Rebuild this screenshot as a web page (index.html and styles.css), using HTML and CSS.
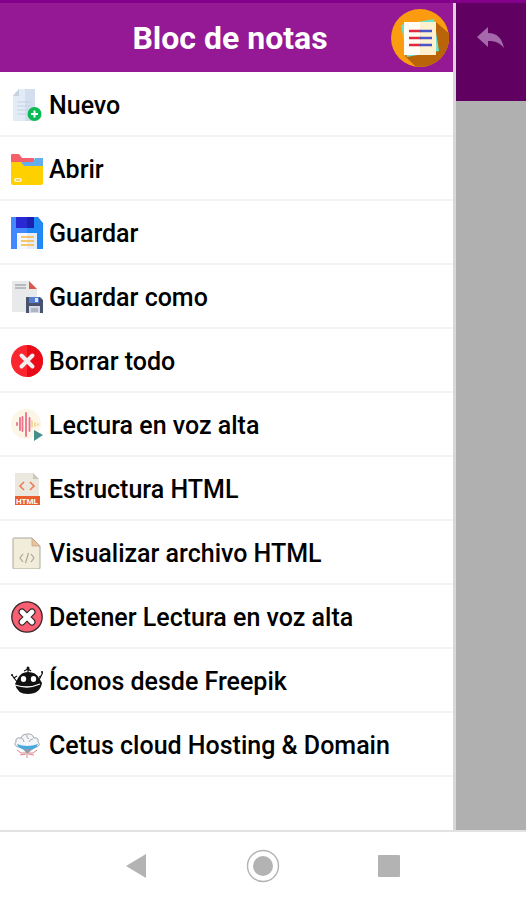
FILE: index.html
```html
<!DOCTYPE html>
<html lang="es">
<head>
  <meta charset="UTF-8">
  <meta name="viewport" content="width=device-width, initial-scale=1.0">
  <title>Bloc de notas</title>
  <link rel="stylesheet" href="styles.css">
</head>
<body>
  <div class="app">
    <aside class="drawer">
      <header class="drawer-header">
        <h1>Bloc de notas</h1>
        <svg class="logo" viewBox="0 0 60 60" aria-hidden="true">
          <circle cx="30" cy="30" r="29" fill="#fb9b10"/>
          <path d="M46 14L58.600 25a29 29 0 0 1-33 33.500L15 48z" fill="#b96408"/>
          <path d="M11 17L44 11l5 32-32 6z" fill="#6ee0cf"/>
          <path d="M14 14h32v33H14z" fill="#fffdf5"/>
          <path d="M30 14h16v33H30z" fill="#fff1cf"/>
          <path d="M19 23h12M19 30h12M19 37h12" stroke="#e02840" stroke-width="2.600"/>
          <path d="M30 23h12M30 30h12M30 37h12" stroke="#4a56c8" stroke-width="2.600"/>
        </svg>
      </header>
      <nav>
        <ul class="menu">
          <li><a href="#nuevo">
            <svg viewBox="0 0 32 32" aria-hidden="true">
              <path d="M8 0h16v32H2V6z" fill="#e3ebf6"/>
              <path d="M14 0h10v32H14z" fill="#d3deee"/>
              <path d="M2 7l6-7v7z" fill="#c5d2e2"/>
              <path d="M6 13h14M6 17h14M6 21h11M6 25h9" stroke="#c5d2e2"/>
              <circle cx="23.500" cy="25" r="7" fill="#0abb55"/>
              <path d="M23.500 21.500v7M20 25h7" stroke="#fff" stroke-width="2"/>
            </svg>
            <span>Nuevo</span></a></li>
          <li><a href="#abrir">
            <svg viewBox="0 0 32 32" aria-hidden="true">
              <path d="M0 2q0-1 1-1h7l3 4h12v9H0z" fill="#f4606c"/>
              <path d="M10 9h12l2-4h8v13H10z" fill="#66adf0"/>
              <path d="M0 9h10l3 4h19v17q0 2-2 2H2q-2 0-2-2z" fill="#ffd000"/>
              <rect x="3" y="25" width="8" height="4" rx="2" fill="#fff3bd"/>
              <path d="M5 27h4" stroke="#d3ac38"/>
            </svg>
            <span>Abrir</span></a></li>
          <li><a href="#guardar">
            <svg viewBox="0 0 32 32" aria-hidden="true">
              <path d="M0 0h27l5 6v26H0z" fill="#2088f5"/>
              <path d="M0 0h16v32H0z" fill="#4388ff"/>
              <path d="M5 0h18v11H5z" fill="#2929d3"/>
              <path d="M16 0h7v11h-7z" fill="#1b20b0"/>
              <path d="M6 16h20v16H6z" fill="#f5f8ff"/>
              <path d="M16 16h10v16H16z" fill="#e4edf8"/>
              <path d="M10 20h13M10 24h13M10 28h13" stroke="#f9b73c" stroke-width="1.600"/>
            </svg>
            <span>Guardar</span></a></li>
          <li><a href="#guardar-como">
            <svg viewBox="0 0 32 32" aria-hidden="true">
              <path d="M1 0h17l8 8v23H1z" fill="#e8e9eb"/>
              <path d="M18 0l8 8h-8z" fill="#d9594f"/>
              <path d="M4 4h11M4 7h11" stroke="#a9abb0" stroke-width="1.600"/>
              <path d="M15 16h14l3 3v13H15z" fill="#48536d"/>
              <path d="M18 16h10v6H18z" fill="#567fd0"/>
              <path d="M24 17h3v4h-3z" fill="#dbe5f5"/>
              <path d="M18 25h11v7H18z" fill="#d5dae5"/>
              <path d="M20 28h7M20 30h7" stroke="#8790a5"/>
            </svg>
            <span>Guardar como</span></a></li>
          <li><a href="#borrar">
            <svg viewBox="0 0 32 32" aria-hidden="true">
              <circle cx="16" cy="16" r="16" fill="#fb2630"/>
              <path d="M16 0a16 16 0 0 1 0 32z" fill="#e90c18"/>
              <path d="M10.500 10.500l11 11M21.500 10.500l-11 11" stroke="#f1eef0" stroke-width="4" stroke-linecap="round"/>
            </svg>
            <span>Borrar todo</span></a></li>
          <li><a href="#lectura">
            <svg viewBox="0 0 32 32" aria-hidden="true">
              <circle cx="15" cy="15" r="15" fill="#fdf5e6"/>
              <path d="M6 14v2M9 9v12M11.500 8v14M15 4v23M18.500 9v13" stroke="#e9718b" stroke-width="1.800" stroke-linecap="round"/>
              <path d="M21 12v6M24 14v3M27 15v1" stroke="#f2cf8c" stroke-width="1.600" stroke-linecap="round"/>
              <path d="M23 21l9 5-9 6z" fill="#438f8c"/>
            </svg>
            <span>Lectura en voz alta</span></a></li>
          <li><a href="#estructura">
            <svg viewBox="0 0 32 32" aria-hidden="true">
              <path d="M4 0h18l6 6v18H4z" fill="#ebe8df"/>
              <path d="M22 0l6 6h-6z" fill="#c9c8bd"/>
              <path d="M13 9l-4 4 4 4M19 9l4 4-4 4" fill="none" stroke="#ee7b50" stroke-width="1.600"/>
              <path d="M4 23h25v9H4z" fill="#e9602e"/>
              <text x="16" y="30.500" class="tag">HTML</text>
            </svg>
            <span>Estructura HTML</span></a></li>
          <li><a href="#visualizar">
            <svg viewBox="0 0 32 32" aria-hidden="true">
              <path d="M3 1h18l8 8v22q0 1-1 1H3q-1 0-1-1V2q0-1 1-1z" fill="#f1edda" stroke="#aaa998"/>
              <path d="M21 1v8h8z" fill="#f0c29a" stroke="#b7a487" stroke-width=".7"/>
              <path d="M12 17l-3 4 3 4M20 17l3 4-3 4M17.500 16l-3 10" fill="none" stroke="#aaa79c" stroke-width="1.200"/>
            </svg>
            <span>Visualizar archivo HTML</span></a></li>
          <li><a href="#detener">
            <svg viewBox="0 0 32 32" aria-hidden="true">
              <circle cx="16" cy="16" r="15.200" fill="#f85f73" stroke="#35272b" stroke-width="1.300"/>
              <path d="M11 11l10 10M21 11l-10 10" stroke="#2b2224" stroke-width="7" stroke-linecap="round"/>
              <path d="M11 11l10 10M21 11l-10 10" stroke="#fff" stroke-width="4.800" stroke-linecap="round"/>
            </svg>
            <span>Detener Lectura en voz alta</span></a></li>
          <li><a href="#iconos">
            <svg viewBox="0 0 32 32" aria-hidden="true">
              <path d="M7 13Q10 7 17 7q8 0 11 6l3 5q-2 11-14 11Q6 29 4 19z" fill="#111"/>
              <path d="M17 8V4M7 18l-4-5M27 17l3-6M1 10l2 3 3-2M28 12l2-1 2-4M13 6l4-2 3 2" fill="none" stroke="#111" stroke-width="1.200"/>
              <circle cx="17" cy="3" r="1.500" fill="#111"/>
              <circle cx="1" cy="10" r="1" fill="#111"/>
              <circle cx="31" cy="7" r="1" fill="#111"/>
              <ellipse cx="12.500" cy="14" rx="2.700" ry="3" fill="#fff"/>
              <ellipse cx="22.500" cy="14" rx="2.700" ry="3" fill="#fff"/>
              <path d="M4 20q6 2 12 2t13-3" fill="none" stroke="#fff" stroke-width="1.300"/>
            </svg>
            <span>Íconos desde Freepik</span></a></li>
          <li><a href="#cetus">
            <svg viewBox="0 0 32 32" aria-hidden="true">
              <path d="M7 18q-5-2-2-5-1-5 5-4 1-4 6-4 5-1 7 4 5-1 4 4 3 3-1 5z" fill="#f3f5f7" stroke="#a0a4aa"/>
              <path d="M10 9q3 1 3 4M16 6q-1 3 2 4M22 10q-3 0-4 3" fill="none" stroke="#a5a9af"/>
              <path d="M6 15q10 4 21 0-2 6-10 6-9 0-11-6z" fill="#48a9df"/>
              <path d="M12 20l4 5 6-5z" fill="#919caa"/>
              <path d="M6 21l4 3h5M26 21l-4 3h-5M9 26l6-1M23 26l-6-1M16 25v4" fill="none" stroke="#e3858b"/>
            </svg>
            <span>Cetus cloud Hosting &amp; Domain</span></a></li>
        </ul>
      </nav>
    </aside>
    <main class="page">
      <div class="toolbar">
        <button type="button" aria-label="Deshacer">
          <svg viewBox="0 0 28 22" aria-hidden="true">
            <path d="M0 10L11 0v6q13 0 16 15-6-8-16-7v6z" fill="#a568aa"/>
          </svg>
        </button>
      </div>
    </main>
  </div>
  <footer class="system-nav">
    <button type="button" aria-label="Atrás">
      <svg viewBox="0 0 34 34" aria-hidden="true"><path d="M6 17L26 5v24z" fill="#b3b3b3"/></svg>
    </button>
    <button type="button" aria-label="Inicio">
      <svg viewBox="0 0 34 34" aria-hidden="true">
        <circle cx="17" cy="17" r="15.500" fill="none" stroke="#b3b3b3" stroke-width="1.400"/>
        <circle cx="17" cy="17" r="10" fill="#b3b3b3"/>
      </svg>
    </button>
    <button type="button" aria-label="Recientes">
      <svg viewBox="0 0 34 34" aria-hidden="true"><rect x="6" y="6" width="22" height="22" rx="1" fill="#b3b3b3"/></svg>
    </button>
  </footer>
</body>
</html>
```

FILE: styles.css
```css
* {
  box-sizing: border-box;
}
body {
  margin: 0;
  min-height: 100vh;
  display: flex;
  flex-direction: column;
  font-family: Roboto, "Liberation Sans", sans-serif;
  background: #fff;
  color: #000;
}
button {
  padding: 0;
  border: none;
  background: none;
  cursor: pointer;
}
svg {
  display: block;
}
.app {
  flex: 1;
  display: flex;
  border-top: 3px solid #83008a;
}
.drawer {
  flex: 1;
  background: #fff;
  border-right: 3px solid #dcd5de;
}
.drawer-header {
  display: grid;
  grid-template-columns: 1fr auto 1fr;
  align-items: center;
  height: 69px;
  padding: 0 3px 0 10px;
  background: #951994;
}
.drawer-header h1 {
  grid-column: 2;
  margin: 0;
  font-size: 32px;
  font-weight: 700;
  color: #fff;
}
.logo {
  width: 60px;
  height: 60px;
  justify-self: end;
}
.menu {
  margin: 0;
  padding: 1px 0 0;
  list-style: none;
}
.menu li {
  border-bottom: 2px solid #f3f3f3;
}
.menu a {
  display: flex;
  align-items: center;
  gap: 6px;
  height: 62px;
  padding: 2px 11px 0;
  font-size: 25px;
  font-weight: 500;
  color: #000;
  text-decoration: none;
}
.menu svg {
  width: 32px;
  height: 32px;
}
.tag {
  font-size: 8px;
  font-weight: 700;
  text-anchor: middle;
  fill: #fff;
}
.page {
  width: 70px;
  background: #b0b0b0;
}
.toolbar {
  display: flex;
  align-items: flex-start;
  justify-content: center;
  height: 98px;
  padding-top: 24px;
  background: #600060;
}
.toolbar svg {
  width: 28px;
  height: 22px;
}
.system-nav {
  display: flex;
  align-items: center;
  height: 70px;
  padding: 0 14%;
  border-top: 2px solid #e2e2e2;
}
.system-nav button {
  flex: 1;
  display: flex;
  justify-content: center;
}
.system-nav svg {
  width: 34px;
  height: 34px;
}
```
